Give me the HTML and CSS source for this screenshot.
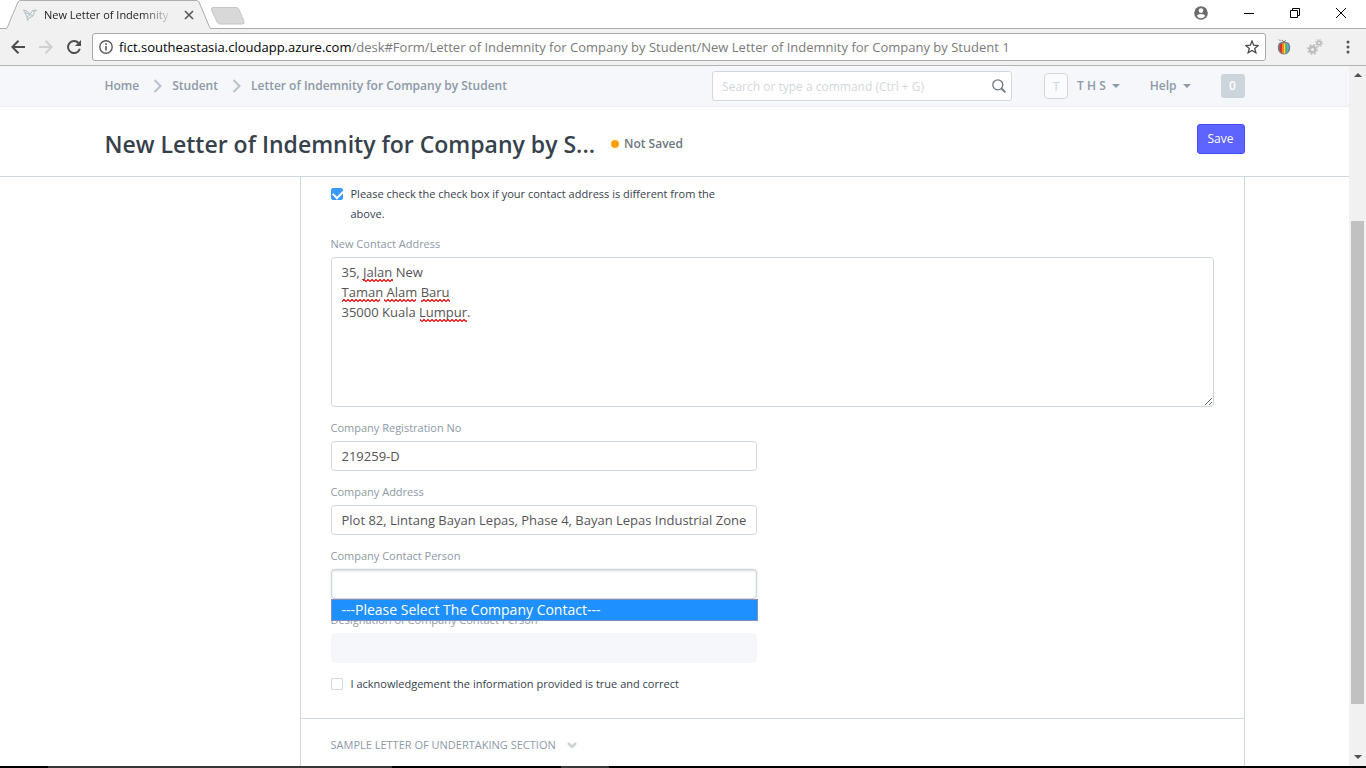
FILE: index.html
```html
<!DOCTYPE html>
<html lang="en">
  <head>
    <meta charset="UTF-8" />
    <meta name="viewport" content="width=device-width, initial-scale=1.0" />
    <title>New Letter of Indemnity for Company by Student 1</title>
    <link rel="stylesheet" href="styles.css">
  </head>
  <body>
    <!-- Browser window -->
    <div class="tab-strip">
      <div class="tab">
        <svg class="tab-shape" viewBox="0 0 206 29" width="206" height="29">
          <path d="M0 29 L1 28 L12 2 Q13 0.5 15 0.5 H190 Q192 0.5 193 2 L204 28 L206 29 Z" fill="#f1f1f1" />
          <path d="M0 28.5 Q1 28.5 1.500 27 L12 2 Q13 0.5 15 0.5 H190 Q192 0.5 193 2 L203.500 27 Q204 28.5 206 28.5" fill="none" stroke="#adadad" />
        </svg>
        <svg class="favicon" viewBox="0 0 14 12" width="14" height="12" fill="none" stroke="#b3bcc6">
          <path d="M0.500 1 L4 2 L7 5.500 L9.500 1.500 L13.500 1 L11.500 3 L10 7 L6 9 L4.500 11.500 L4 8 Z M7 5.500 L4 8 M7 5.500 L10 7 M2 3.500 L7 5.500 M9.500 1.500 L11.500 3" />
        </svg>
        <span class="tab-title">New Letter of Indemnity</span>
        <button class="icon-btn" aria-label="Close tab">
          <svg viewBox="0 0 10 10" width="10" height="10" stroke="#5a5a5a" stroke-width="1.700">
            <path d="M1 1 L9 9 M9 1 L1 9" />
          </svg>
        </button>
      </div>
      <button class="icon-btn new-tab" aria-label="New tab">
        <svg viewBox="0 0 36 18" width="36" height="18">
          <path d="M3 0.500 H26 Q28 0.500 29 2.500 L34 14.500 Q35 17 32 17 H10 Q8 17 7 15 L1.500 3 Q1 0.500 3 0.500 Z" fill="#d8d8d8" stroke="#c6c6c6" />
        </svg>
      </button>
      <div class="window-buttons">
        <button class="icon-btn" aria-label="Profile">
          <svg viewBox="0 0 14 14" width="14" height="14">
            <circle cx="7" cy="7" r="6.800" fill="#6b6b6b" />
            <circle cx="7" cy="4.600" r="2.300" fill="#fff" />
            <path d="M2.800 10 Q3.500 8 7 8 Q10.500 8 11.200 10 Q9.500 12.200 7 12.200 Q4.500 12.200 2.800 10 Z" fill="#fff" />
          </svg>
        </button>
        <button class="icon-btn" aria-label="Minimize">
          <svg viewBox="0 0 10 10" width="10" height="10" stroke="#000"><path d="M0 5.500 H10" /></svg>
        </button>
        <button class="icon-btn" aria-label="Restore">
          <svg viewBox="0 0 10 10" width="10" height="10" fill="none" stroke="#000">
            <path d="M0.500 2.500 H7.500 V9.500 H0.500 Z M2.500 2.500 V0.500 H9.500 V7.500 H7.500" />
          </svg>
        </button>
        <button class="icon-btn" aria-label="Close">
          <svg viewBox="0 0 10 10" width="10" height="10" stroke="#000"><path d="M0 0 L10 10 M10 0 L0 10" /></svg>
        </button>
      </div>
    </div>

    <div class="toolbar">
      <button class="icon-btn" aria-label="Back">
        <svg viewBox="0 0 14 14" width="14" height="14" fill="none" stroke="#4d4d4d" stroke-width="2">
          <path d="M14 7 H1.500 M7.500 0.700 L1.300 7 L7.500 13.300" />
        </svg>
      </button>
      <button class="icon-btn" aria-label="Forward">
        <svg viewBox="0 0 14 14" width="14" height="14" fill="none" stroke="#d0d0d0" stroke-width="2">
          <path d="M0 7 H12.500 M6.500 0.700 L12.700 7 L6.500 13.300" />
        </svg>
      </button>
      <button class="icon-btn" aria-label="Reload">
        <svg viewBox="0 0 14 14" width="14" height="14">
          <path d="M11.500 3 A6 6 0 1 0 12.800 8.800" fill="none" stroke="#4d4d4d" stroke-width="2" />
          <path d="M14 0 V6 H8 Z" fill="#4d4d4d" />
        </svg>
      </button>
      <div class="address-bar">
        <svg viewBox="0 0 14 14" width="14" height="14">
          <circle cx="7" cy="7" r="6.200" fill="none" stroke="#5a5a5a" stroke-width="1.400" />
          <path d="M6.200 6 H7.800 V10.500 H6.200 Z M6.200 3.300 H7.800 V4.900 H6.200 Z" fill="#5a5a5a" />
        </svg>
        <div class="url"><span class="url-host">fict.southeastasia.cloudapp.azure.com</span>/desk#Form/Letter of Indemnity for Company by Student/New Letter of Indemnity for Company by Student 1</div>
        <svg viewBox="0 0 14 14" width="14" height="14">
          <path d="M7 1 L8.700 5.200 L13.200 5.500 L9.700 8.400 L10.900 12.800 L7 10.400 L3.100 12.800 L4.300 8.400 L0.800 5.500 L5.300 5.200 Z" fill="none" stroke="#4d4d4d" stroke-width="1.300" />
        </svg>
      </div>
      <div class="extensions">
        <svg viewBox="0 0 14 16" width="14" height="16">
          <path d="M2 4 Q7 1.500 12 4 Q14 7 13 11 Q11 15.500 7 15.500 Q3 15.500 1 11 Q0 7 2 4 Z" fill="#7a7a86" />
          <path d="M3 5 H5 V14 Q2.500 12.500 2.500 9 Z" fill="#e0302a" />
          <path d="M5 4.200 H7 V14.800 L5 14 Z" fill="#f08a1c" />
          <path d="M7 4.200 H8.500 V14.800 H7 Z" fill="#f5dc3a" />
          <path d="M8.500 4.200 H10 V14.300 L8.500 14.800 Z" fill="#49b667" />
          <path d="M10 4.500 L11.500 5.500 Q12.500 10 10 14 Z" fill="#4fb3e0" />
          <path d="M7 4 Q6.500 1.500 4.500 1 M7 3 Q8 1.500 9 1.500 M2 0.500 L3.500 2" fill="none" stroke="#777" />
        </svg>
        <svg viewBox="0 0 16 16" width="16" height="16" fill="none" stroke="#bdbdbd">
          <circle cx="5.500" cy="10.500" r="2.700" stroke-width="2.400" />
          <circle cx="5.500" cy="10.500" r="4.600" stroke-width="1.600" stroke-dasharray="1.800 1.812" />
          <circle cx="12" cy="4" r="1.900" stroke-width="1.800" />
          <circle cx="12" cy="4" r="3.400" stroke-width="1.200" stroke-dasharray="1.300 1.370" />
        </svg>
        <button class="icon-btn menu-btn" aria-label="Menu">
          <svg viewBox="0 0 4 14" width="4" height="14" fill="#555">
            <circle cx="2" cy="2" r="1.500" /><circle cx="2" cy="7" r="1.500" /><circle cx="2" cy="12" r="1.500" />
          </svg>
        </button>
      </div>
    </div>

    <!-- Web page -->
    <div class="viewport">
      <div class="page">
        <header class="navbar">
          <div class="container">
            <nav class="breadcrumbs">
              <a href="#">Home</a>
              <svg viewBox="0 0 9 14" width="9" height="14"><path d="M1.500 1 L7.500 7 L1.500 13" /></svg>
              <a href="#">Student</a>
              <svg viewBox="0 0 9 14" width="9" height="14"><path d="M1.500 1 L7.500 7 L1.500 13" /></svg>
              <a href="#">Letter of Indemnity for Company by Student</a>
            </nav>
            <div class="search">
              <input type="text" class="search-input" aria-label="Search" placeholder="Search or type a command (Ctrl + G)" />
              <svg class="search-icon" viewBox="0 0 14 14" width="14" height="14" fill="none" stroke="#6c7680">
                <circle cx="5.800" cy="5.800" r="5" stroke-width="1.300" />
                <path d="M9.500 9.500 L13.300 13.300" stroke-width="1.800" />
              </svg>
            </div>
            <a href="#" class="user-menu"><span class="avatar">T</span>T H S<span class="caret"></span></a>
            <a href="#" class="help-menu">Help<span class="caret"></span></a>
            <a href="#" class="badge">0</a>
          </div>
        </header>

        <div class="page-head">
          <div class="container">
            <h1>New Letter of Indemnity for Company by S...</h1>
            <span class="indicator">Not Saved</span>
            <button class="btn-primary">Save</button>
          </div>
        </div>

        <main class="page-body">
          <div class="container">
            <form class="form-layout">
              <section class="form-section">
                <div class="form-column">
                  <label class="checkbox">
                    <input type="checkbox" checked />
                    <span>Please check the check box if your contact address is different from the above.</span>
                  </label>
                </div>
                <div class="field">
                  <label for="new-address">New Contact Address</label>
                  <div class="textarea-wrap">
                    <textarea id="new-address" class="form-control" spellcheck="false">35, Jalan New
Taman Alam Baru
35000 Kuala Lumpur.</textarea>
                    <!-- spelling marks -->
                    <svg class="spelling" viewBox="0 0 150 60" width="150" height="60">
                      <defs>
                        <pattern id="squiggle" width="4" height="5" patternUnits="userSpaceOnUse">
                          <path d="M-1 1.500 L0 2.500 L2 0.500 L4 2.500 L5 1.500" fill="none" stroke="#e00000" stroke-width="1.200" />
                        </pattern>
                      </defs>
                      <g fill="url(#squiggle)">
                        <rect x="21" y="15" width="30" height="4" />
                        <rect x="0" y="35" width="38" height="4" />
                        <rect x="42" y="35" width="32" height="4" />
                        <rect x="79" y="35" width="29" height="4" />
                        <rect x="78" y="55" width="47" height="4" />
                      </g>
                    </svg>
                  </div>
                </div>
                <div class="form-column">
                  <div class="field">
                    <label for="reg-no">Company Registration No</label>
                    <input type="text" id="reg-no" class="form-control" value="219259-D" />
                  </div>
                  <div class="field">
                    <label for="company-address">Company Address</label>
                    <input type="text" id="company-address" class="form-control" value="Plot 82, Lintang Bayan Lepas, Phase 4, Bayan Lepas Industrial Zone" />
                  </div>
                  <div class="field select-field">
                    <label for="contact-person">Company Contact Person</label>
                    <select id="contact-person" class="form-control focused">
                      <option></option>
                    </select>
                    <div class="dropdown" role="listbox">
                      <div class="dropdown-item" role="option" aria-selected="true">---Please Select The Company Contact---</div>
                    </div>
                  </div>
                  <div class="field">
                    <label for="designation">Designation of Company Contact Person</label>
                    <input type="text" id="designation" class="form-control" disabled />
                  </div>
                  <label class="checkbox">
                    <input type="checkbox" />
                    <span>I acknowledgement the information provided is true and correct</span>
                  </label>
                </div>
              </section>
              <section class="form-section section-collapsed">
                <h2>SAMPLE LETTER OF UNDERTAKING SECTION</h2>
                <svg viewBox="0 0 10 7" width="10" height="7" fill="none" stroke="#cdd5db" stroke-width="2.500">
                  <path d="M1 1 L5 5 L9 1" />
                </svg>
              </section>
            </form>
          </div>
        </main>
      </div>

      <div class="scrollbar">
        <span class="arrow-up"></span>
        <div class="track"><div class="thumb"></div></div>
        <span class="arrow-down"></span>
      </div>
    </div>
    <div class="taskbar"></div>
  </body>
</html>
```
FILE: styles.css
```css
* {
  box-sizing: border-box;
}
body {
  margin: 0;
  height: 100vh;
  display: flex;
  flex-direction: column;
  overflow: hidden;
  font-family: "Segoe UI", "Open Sans", sans-serif;
  font-size: 11px;
  line-height: 20px;
  color: #36414c;
  background-color: #fff;
}
a {
  color: inherit;
  text-decoration: none;
}
svg {
  display: block;
  flex: none;
}
button,
input,
select,
textarea {
  font-family: inherit;
}
.icon-btn {
  padding: 0;
  border: none;
  background: none;
}

/* Browser window */
.tab-strip {
  flex: none;
  display: flex;
  height: 29px;
  padding-left: 6px;
  border-bottom: 1px solid #adadad;
}
.tab {
  position: relative;
  display: flex;
  align-items: center;
  width: 204px;
  height: 28px;
  padding: 2px 16px 0 17px;
}
.tab-shape {
  position: absolute;
  top: 0;
  left: 0;
}
.favicon,
.tab-title,
.tab .icon-btn {
  position: relative;
}
.tab-title {
  flex: 1;
  margin: 0 10px 0 7px;
  overflow: hidden;
  white-space: nowrap;
  color: #222;
  -webkit-mask-image: linear-gradient(to right, #000 75%, transparent);
  mask-image: linear-gradient(to right, #000 75%, transparent);
}
.new-tab {
  height: 18px;
  margin-top: 7px;
}
.window-buttons {
  display: flex;
  align-items: center;
  gap: 36px;
  height: 26px;
  margin-left: auto;
  padding-right: 20px;
}
.toolbar {
  flex: none;
  display: flex;
  align-items: center;
  gap: 14px;
  height: 37px;
  padding: 0 16px 0 11px;
  background-color: #f1f1f1;
  border-bottom: 1px solid #b3b3b3;
}
.address-bar {
  flex: 1;
  display: flex;
  align-items: center;
  gap: 6px;
  height: 28px;
  margin: 0 -3px;
  padding: 0 6px;
  background-color: #fff;
  border: 1px solid #a9a9a9;
  border-radius: 3px;
}
.url {
  flex: 1;
  font-size: 13px;
  white-space: nowrap;
  color: #7a7a7a;
}
.url-host {
  color: #000;
}
.extensions {
  display: flex;
  align-items: center;
  gap: 16px;
}
.menu-btn {
  margin-left: 7px;
}

.viewport {
  flex: 1;
  display: flex;
  min-height: 0;
}
.page {
  flex: 1;
  display: flex;
  flex-direction: column;
  min-width: 0;
  overflow: hidden;
}
.container {
  display: flex;
  align-items: center;
  width: 100%;
  max-width: 1170px;
  margin: 0 auto;
  padding: 0 15px;
}

/* Navbar */
.navbar {
  flex: none;
  display: flex;
  height: 41px;
  background-color: #f5f7fa;
  border-bottom: 1px solid #ebeff2;
  font-size: 12px;
  font-weight: 600;
  color: #8d99a6;
}
.breadcrumbs {
  flex: 1;
  display: flex;
  align-items: center;
  gap: 10px;
}
.breadcrumbs svg {
  margin-left: 4px;
  fill: none;
  stroke: #b8c2cc;
  stroke-width: 2;
}
.search {
  position: relative;
  width: 300px;
  margin-right: 32px;
}
.search-input {
  display: block;
  width: 100%;
  height: 30px;
  padding: 4px 30px 4px 9px;
  border: 1px solid #d1d8dd;
  border-radius: 3px;
  font-size: 12px;
}
.search-input::placeholder {
  color: #d1d8dd;
}
.search-icon {
  position: absolute;
  top: 8px;
  right: 6px;
}
.user-menu,
.help-menu {
  display: flex;
  align-items: center;
}
.avatar {
  width: 24px;
  height: 26px;
  margin-right: 9px;
  border: 1px solid #d1d8dd;
  border-radius: 4px;
  background-color: #fafbfc;
  font-size: 13px;
  font-weight: 400;
  line-height: 24px;
  text-align: center;
  color: #d1d8dd;
}
.caret {
  margin-left: 6px;
  border: 4px solid transparent;
  border-top-color: #8d99a6;
  border-bottom: none;
}
.help-menu {
  margin-left: 30px;
}
.badge {
  width: 24px;
  height: 24px;
  margin-left: 30px;
  border-radius: 3px;
  background-color: #cdd5dc;
  line-height: 24px;
  text-align: center;
  color: #fff;
}

/* Page head */
.page-head {
  flex: none;
  display: flex;
  height: 70px;
  border-bottom: 1px solid #d1d8dd;
}
h1 {
  margin: 4px 0 0;
  font-size: 23px;
  font-weight: 600;
  line-height: 32px;
}
.indicator {
  display: flex;
  align-items: center;
  margin: 4px 0 0 16px;
  font-size: 12px;
  font-weight: 600;
  color: #6c7680;
}
.indicator::before {
  content: "";
  width: 8px;
  height: 8px;
  margin-right: 5px;
  border-radius: 50%;
  background-color: #ffa00a;
}
.btn-primary {
  height: 30px;
  margin: 0 0 6px auto;
  padding: 0 10px;
  border: 1px solid #444bff;
  border-radius: 3px;
  background-color: #5e64ff;
  font-size: 12px;
  color: #fff;
}

/* Form */
.page-body {
  flex: 1;
  display: flex;
  min-height: 0;
}
.page-body .container {
  align-items: stretch;
}
.form-layout {
  flex: 1;
  margin-left: 195px;
  border: 1px solid #d1d8dd;
  border-width: 0 1px;
}
.form-section {
  padding: 7px 30px 14px;
}
.form-column {
  width: calc(50% - 15px);
}
.field {
  margin-bottom: 11px;
}
.field > label {
  display: block;
  margin-bottom: 3px;
  color: #8d99a6;
}
.checkbox {
  display: flex;
  gap: 8px;
  margin-bottom: 10px;
}
.checkbox span {
  flex: 1;
  padding-right: 24px;
}
.checkbox input {
  appearance: none;
  flex: none;
  width: 12px;
  height: 12px;
  margin: 4px 0 0;
  border: 1px solid #d1d8dd;
  border-radius: 2px;
}
.checkbox input:checked {
  border-color: #3b99fc;
  background-color: #3b99fc;
}
.checkbox input:checked::before {
  content: "";
  display: block;
  width: 8px;
  height: 5px;
  margin: 1px;
  border: 2px solid #fff;
  border-width: 0 0 2px 2px;
  transform: rotate(-45deg);
}
.form-control {
  display: block;
  width: 100%;
  height: 30px;
  padding: 4px 10px;
  border: 1px solid #d1d8dd;
  border-radius: 4px;
  background-color: #fff;
  font-size: 13px;
  line-height: 20px;
  color: #555;
}
.form-control:disabled {
  border-color: #f5f7fa;
  background-color: #f5f7fa;
}
textarea.form-control {
  height: 150px;
}
.textarea-wrap,
.select-field {
  position: relative;
}
.spelling {
  position: absolute;
  top: 7px;
  left: 11px;
}
select.form-control {
  appearance: none;
}
.focused {
  box-shadow: 0 0 2px #d1d8dd, inset 0 1px 2px #d1d8dd;
}
.dropdown {
  position: absolute;
  top: 100%;
  left: 0;
  right: -1px;
  border: 1px solid #7f8fc0;
  background-color: #1e90ff;
}
.dropdown-item {
  padding: 0 10px;
  font-size: 14px;
  color: #fff;
}
.section-collapsed {
  display: flex;
  align-items: center;
  padding-top: 16px;
  border-top: 1px solid #d1d8dd;
}
h2 {
  margin: 0 11px 0 0;
  font-size: 11px;
  font-weight: 400;
  color: #8d99a6;
}

/* Scrollbar */
.scrollbar {
  display: flex;
  flex-direction: column;
  align-items: center;
  width: 17px;
  padding: 7px 0;
  background-color: #f1f1f1;
}
.arrow-up,
.arrow-down {
  border: 4px solid transparent;
}
.arrow-up {
  border-top: none;
  border-bottom-color: #505050;
}
.arrow-down {
  border-bottom: none;
  border-top-color: #505050;
}
.track {
  flex: 1;
  display: flex;
  flex-direction: column;
  width: 13px;
}
.thumb {
  flex: 483;
  background-color: #c1c1c1;
}
.track::before {
  content: "";
  flex: 144;
}
.track::after {
  content: "";
  flex: 51;
}
.taskbar {
  flex: none;
  height: 2px;
  background: linear-gradient(to right, #000 48px, #38383a 48px 392px, #000 392px 561px, #38383a 561px 609px, #000 609px);
}
```
